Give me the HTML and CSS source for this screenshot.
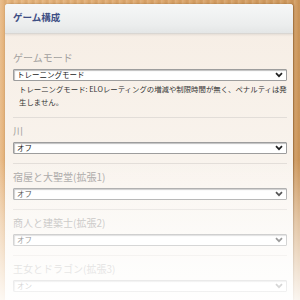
FILE: index.html
```html
<!DOCTYPE html>
<html>
    <head>
        <meta name="viewport" content="width=device-width, initial-scale=1">
        <link rel="stylesheet" href="styles.css">
    </head>
    <body>
        <!-- Game settings panel -->
        <div class="panel">
            <div class="panel_head">ゲーム構成</div>
            <div class="panel_body">
                <div class="field">
                    <label class="field_label">ゲームモード</label>
                    <select class="field_select"><option>トレーニングモード</option></select>
                    <p class="field_note"><span class="note_key">トレーニングモード</span>: ELOレーティングの増減や制限時間が無く、ペナルティは発<br>生しません。</p>
                </div>
                <hr class="sep">
                <div class="field">
                    <label class="field_label">川</label>
                    <select class="field_select"><option>オフ</option></select>
                </div>
                <hr class="sep">
                <div class="field">
                    <label class="field_label">宿屋と大聖堂(拡張1)</label>
                    <select class="field_select"><option>オフ</option></select>
                </div>
                <hr class="sep">
                <div class="field">
                    <label class="field_label">商人と建築士(拡張2)</label>
                    <select class="field_select"><option>オフ</option></select>
                </div>
                <hr class="sep">
                <div class="field">
                    <label class="field_label">王女とドラゴン(拡張3)</label>
                    <select class="field_select"><option>オン</option></select>
                </div>
            </div>
        </div>

        <!-- fade at the bottom of the view -->
        <div class="fade"></div>
    </body>
</html>
```

FILE: styles.css
```css
html, body {
  height: 100%;
}

body {
  margin: 0;
  padding: 4px 7px 0 5px;
  box-sizing: border-box;
  overflow: hidden;
  font-family: "Noto Sans CJK JP", "Noto Sans", sans-serif;
  background-color: #dca66c;
  background-image:
    repeating-linear-gradient(90deg, rgba(255,255,255,0.12) 0px, rgba(255,255,255,0) 3px, rgba(120,70,20,0.10) 5px, rgba(255,255,255,0) 7px),
    linear-gradient(90deg, #e6b67f 0%, #dca66c 50%, #cf9a5f 100%);
}

.panel {
  height: 100%;
  border-radius: 3px 3px 0 0;
  background: linear-gradient(180deg, #f6ede4 0%, #f9f4ee 60%, #fbf8f4 100%);
  box-shadow: 1px 0 2px rgba(90,50,10,0.45);
  overflow: hidden;
}

.panel_head {
  height: 29px;
  padding-left: 8px;
  line-height: 27px;
  font-size: 9.5px;
  font-weight: bold;
  color: #3d4e84;
  background: linear-gradient(180deg, #f6f7f7 0%, #eceeee 70%, #e4e6e6 100%);
  border-bottom: 1px solid #d9d6d2;
  box-shadow: 0 1px 2px rgba(0,0,0,0.08);
}

.panel_body {
  padding: 17px 6px 0 8px;
}

.field {
  display: flex;
  flex-direction: column;
}

.field_label {
  height: 13px;
  line-height: 13px;
  font-size: 10px;
  color: #a3a19f;
  margin-bottom: 5px;
}

.field_select {
  -webkit-appearance: none;
  appearance: none;
  height: 12px;
  box-sizing: border-box;
  margin: 0;
  padding: 0 3px;
  font-family: inherit;
  font-size: 7.5px;
  line-height: 10px;
  color: #222;
  background-color: #fff;
  background-image: url("data:image/svg+xml,%3Csvg xmlns='http://www.w3.org/2000/svg' width='8' height='6'%3E%3Cpath d='M1 1.2l3 3 3-3' fill='none' stroke='%23222' stroke-width='1.7'/%3E%3C/svg%3E");
  background-repeat: no-repeat;
  background-position: right 3px center;
  border: 1px solid #9d9d9d;
  border-radius: 1px;
  box-shadow: inset 1px 1px 1px rgba(0,0,0,0.25);
}

.field_note {
  margin: 0;
  padding: 1px 0 0 6px;
  font-size: 7.4px;
  line-height: 13px;
  color: #333;
}

.note_key {
  color: #333;
}

.sep {
  border: none;
  border-top: 1px solid #e2ddd8;
  margin: 9px 0 6px 0;
}

.field_note + .sep {
  margin-top: 3px;
}

.fade {
  position: absolute;
  left: 0;
  right: 0;
  bottom: 0;
  height: 140px;
  background: linear-gradient(180deg, rgba(255,255,255,0) 0%, rgba(255,255,255,0.45) 45%, rgba(255,255,255,0.9) 100%);
  pointer-events: none;
}
```
